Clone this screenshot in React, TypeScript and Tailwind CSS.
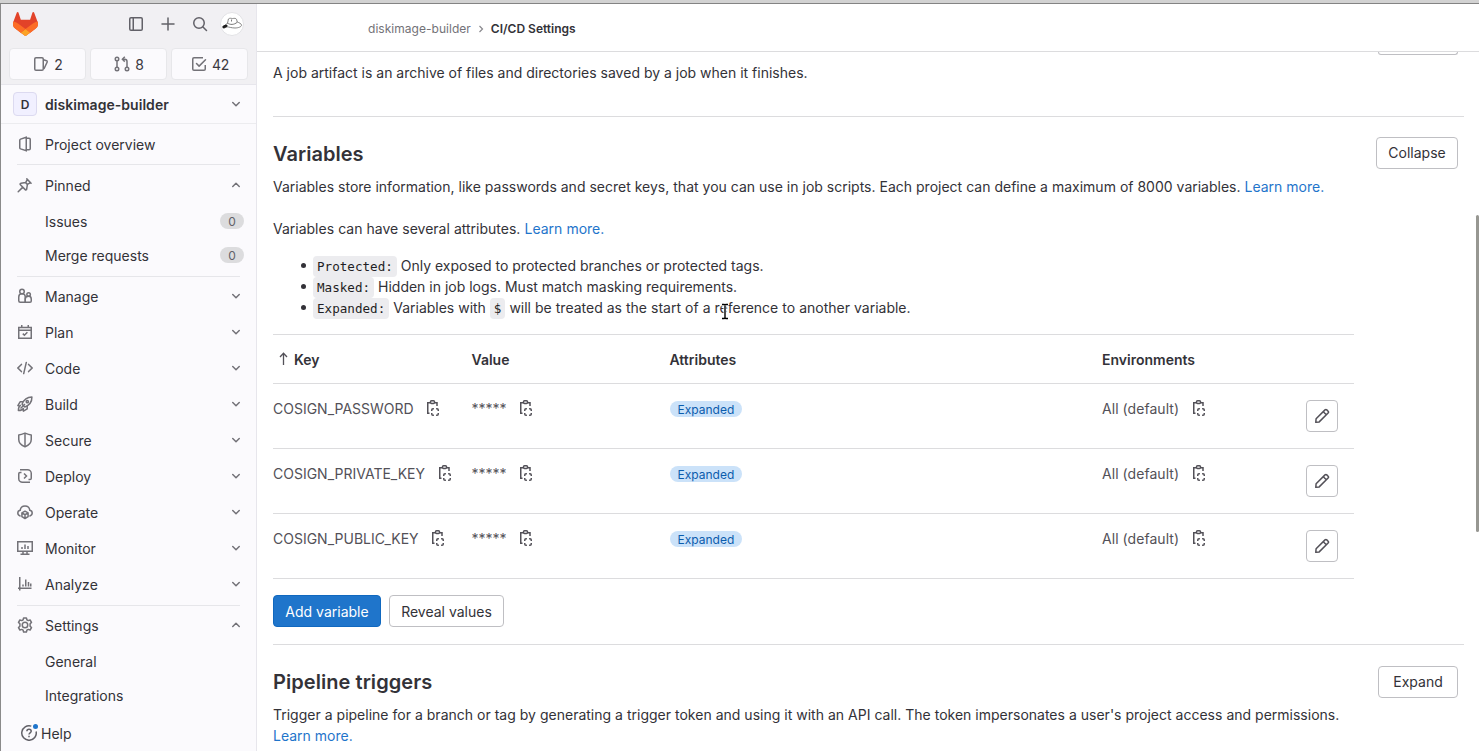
import React from "react";

type IconProps = { className?: string };

function Svg({ className = "", children }: IconProps & { children: React.ReactNode }) {
  return (
    <svg
      viewBox="0 0 16 16"
      className={`block size-4 shrink-0 ${className}`}
      fill="none"
      stroke="currentColor"
      strokeWidth="1.5"
    >
      {children}
    </svg>
  );
}

const icons = {
  sidebar: (
    <>
      <rect x="1.75" y="1.75" width="12.5" height="12.5" rx="1.25" />
      <path d="M5.25 2v12" />
    </>
  ),
  plus: <path d="M8 2v12M2 8h12" strokeLinecap="round" />,
  search: (
    <>
      <circle cx="7" cy="7" r="5.25" />
      <path d="m11 11 3.5 3.5" strokeLinecap="round" />
    </>
  ),
  issues: (
    <>
      <rect x="1.75" y="1.75" width="8.5" height="12.5" rx="1.25" />
      <path d="M10.5 3.8l3 .9c.6.2.9.7.7 1.3l-3.3 7" />
    </>
  ),
  merge: (
    <>
      <circle cx="3" cy="3" r="1.75" />
      <circle cx="3" cy="13" r="1.75" />
      <circle cx="13" cy="13" r="1.75" />
      <path d="M3 4.75v6.5M13 11.25V5.5c0-1.4-.8-2.25-2.2-2.25H9" />
      <path d="M10.8.8 8.4 3.2l2.4 2.4" />
    </>
  ),
  todo: (
    <>
      <path d="M14.25 9v4c0 .7-.55 1.25-1.25 1.25H3c-.7 0-1.25-.55-1.25-1.25V3c0-.7.55-1.25 1.25-1.25h9" />
      <path d="m5.5 7.5 2.6 2.6L14.5 3.7" strokeLinecap="round" strokeLinejoin="round" />
    </>
  ),
  project: (
    <>
      <path d="M9.25 1.2 3.6 3.1c-.5.2-.85.6-.85 1.2v7.4c0 .6.35 1 .85 1.2l5.65 1.9zM9.5 2.25H12c.7 0 1.25.5 1.25 1.25v9c0 .7-.5 1.25-1.25 1.25H9.5" />
    </>
  ),
  pin: (
    <path
      d="M1.2 14.8 5.6 10.4M9.8 1.9l4.3 4.3M10.4 2.5 8.6 5.6 4 6.3c-.9.2-1.2.9-.6 1.5l4.8 4.8c.6.6 1.3.3 1.5-.6l.7-4.6 3.1-1.8M8.6 5.6l1.8 1.8"
      strokeLinecap="round"
      strokeLinejoin="round"
    />
  ),
  manage: (
    <>
      <circle cx="5" cy="3.5" r="2.25" />
      <path d="M8.25 14.25h-5c-.8 0-1.5-.6-1.5-1.5V9c0-1.8 1.4-3.2 3.2-3.2 1.9 0 3.3 1.4 3.3 3.2z" />
      <circle cx="11.6" cy="6.5" r="1.75" />
      <path d="M8.25 14.25h4.7c.7 0 1.3-.6 1.3-1.3v-2c0-1.5-1.1-2.7-2.6-2.7-1.9 0-3.4 1-3.4 2.7z" />
    </>
  ),
  plan: (
    <>
      <path d="M1.75 3.5h12.5v10.75H1.75zM2 6.25h12M4.75 1v2.5M11.25 1v2.5" />
      <path d="m5.8 9.6 1.6 1.6 3-3" />
    </>
  ),
  code: <path d="M4.4 4.4.9 8l3.5 3.6M11.6 4.4 15.1 8l-3.5 3.6M9.3 2.4 6.7 13.6" strokeLinecap="round" />,
  build: (
    <>
      <path d="M5.1 8.2C6.6 4.3 9.4 1.2 14.9 1.1c.1 5.5-3.1 8.4-7.1 9.9z" strokeLinejoin="round" />
      <circle cx="10.3" cy="5.7" r="1.1" />
      <path
        d="M6.2 5.8H3.1L.9 9.6l2 .3M10.2 9.7v3.2l-3.8 2.3-.3-2.1M4 9.3c-1.6.6-2.6 1.7-2.6 5.3 3.4-.1 4.5-1 5.2-2.7"
        strokeLinejoin="round"
      />
      <path d="M3.5 12.5 8 8" />
    </>
  ),
  secure: (
    <>
      <path
        d="M1.75 2.9C4 2.7 6 1.9 8 1.1c2 .8 4 1.6 6.25 1.8v4.5c0 3.4-3 6-6.25 7.4-3.25-1.4-6.25-4-6.25-7.4z"
        strokeLinejoin="round"
      />
      <path d="M8 1.5v13" />
    </>
  ),
  deploy: (
    <>
      <path d="M3 1.75h7.5c2 0 3.75 1.5 3.75 3.5v5c0 .7-.5 1.25-1.25 1.25h-1.5M13 14.25H5.5c-2 0-3.75-1.5-3.75-3.5v-5c0-.7.5-1.25 1.25-1.25h1.5" />
      <path d="M7 5.5 9.5 8 7 10.5" />
    </>
  ),
  operate: (
    <>
      <path
        d="M3.1 11.9C1.7 11.6.8 10.4.8 9.1c0-1.5 1-2.6 2.4-2.8C3.5 3.8 5.5 2 8 2s4.5 1.8 4.8 4.3c1.4.2 2.4 1.3 2.4 2.8 0 1.3-.9 2.5-2.3 2.8"
        strokeLinecap="round"
      />
      <path d="m8 7.2 3.1 1.7v3.8L8 14.5l-3.1-1.8V8.9zM5 9l3 1.7L11 9M8 10.7v3.5" strokeLinejoin="round" />
    </>
  ),
  monitor: (
    <path d="M.75 1.75h14.5v9.5H.75zM6 11.5V14M10 11.5V14M3.5 14.25h9M5 7v2M8 4.5V9M11 6v3" />
  ),
  analyze: <path d="M2.75 1v13.5M1 12.25h13.5M6 8.5v2M8.75 3.5v7M11.5 6v4.5M13.75 7.5v3" />,
  settings: (
    <>
      <path
        d="M6.6.9h2.8l.5 1.9 1.3.8 1.9-.6 1.4 2.4-1.4 1.4v2.4l1.4 1.4-1.4 2.4-1.9-.6-1.3.8-.5 1.9H6.6l-.5-1.9-1.3-.8-1.9.6-1.4-2.4 1.4-1.4V6.8L1.5 5.4 2.9 3l1.9.6 1.3-.8z"
        strokeLinejoin="round"
      />
      <circle cx="8" cy="8" r="2.75" />
    </>
  ),
  help: (
    <>
      <path d="M10.3 1.15A7.25 7.25 0 1 0 15.1 6.5" />
      <path d="M5.9 6.3C5.9 5 6.8 4.2 8 4.2s2.2.8 2.2 2c0 1.5-2.2 1.7-2.2 3.3" />
      <path d="M8 10.7v1.6" />
    </>
  ),
  down: <path d="M4.75 6.5 8 9.7l3.25-3.2" strokeLinecap="round" strokeLinejoin="round" />,
  up: <path d="M4.75 9.5 8 6.3l3.25 3.2" strokeLinecap="round" strokeLinejoin="round" />,
  copy: (
    <>
      <path d="M5 2.75H2.75v10.5H4.5M10 2.75h2V6" />
      <rect x="5.5" y=".75" width="4" height="2.75" rx="1" />
      <path d="M8.9 8.75H8c-.8 0-1.25.45-1.25 1.25v.9M11.1 8.75h.9c.8 0 1.25.45 1.25 1.25v.9M6.75 13.1v.9c0 .8.45 1.25 1.25 1.25h.9M13.25 13.1v.9c0 .8-.45 1.25-1.25 1.25h-.9" />
    </>
  ),
  pencil: (
    <path
      d="M11 1.9c.5-.5 1.3-.5 1.8 0l1.3 1.3c.5.5.5 1.3 0 1.8L5.2 13.9l-3.4.4.3-3.5zM9.3 3.7l3 3"
      strokeLinejoin="round"
    />
  ),
};

type IconName = keyof typeof icons;

function Icon({ name, className }: { name: IconName; className?: string }) {
  return <Svg className={className}>{icons[name]}</Svg>;
}

function GitLabLogo() {
  return (
    <svg viewBox="0 0 25 24" className="block h-6 w-[25px]">
      <path
        d="m24.507 9.5-.034-.09L21.082.562a.896.896 0 0 0-1.694.091l-2.29 7.01H7.825L5.535.653a.898.898 0 0 0-1.694-.09L.451 9.411.416 9.5a6.297 6.297 0 0 0 2.09 7.278l.012.01.03.022 5.16 3.867 2.56 1.935 1.554 1.176a1.051 1.051 0 0 0 1.268 0l1.555-1.176 2.56-1.935 5.197-3.89.014-.01A6.297 6.297 0 0 0 24.507 9.5Z"
        fill="#E24329"
      />
      <path
        d="m24.507 9.5-.034-.09a11.44 11.44 0 0 0-4.56 2.051l-7.447 5.632 4.742 3.584 5.197-3.89.014-.01A6.297 6.297 0 0 0 24.507 9.5Z"
        fill="#FC6D26"
      />
      <path
        d="m7.707 20.677 2.56 1.935 1.555 1.176a1.051 1.051 0 0 0 1.268 0l1.555-1.176 2.56-1.935-4.743-3.584-4.755 3.584Z"
        fill="#FCA326"
      />
      <path
        d="M5.01 11.461a11.43 11.43 0 0 0-4.56-2.05L.416 9.5a6.297 6.297 0 0 0 2.09 7.278l.012.01.03.022 5.16 3.867 4.745-3.584-7.444-5.632Z"
        fill="#FC6D26"
      />
    </svg>
  );
}

function Avatar() {
  return (
    <svg viewBox="0 0 24 24" className="block size-6">
      <circle cx="12" cy="12" r="11.5" fill="#fff" stroke="#e2e2e5" />
      <path
        d="M4.5 13.5c1-1 2-1.6 3-2L8.400 7c1.300-1.200 3-.6 4.200-.4 1.500-.4 3.200-.5 4 .8l.6 2.600c2 .7 4.300 1.700 4.300 3.200 0 1.700-3.500 2.800-6.500 2.800-3.500 0-5.500-1-8-1.200L4 16.200z"
        fill="#fff"
        stroke="#6a6a6a"
        strokeWidth=".8"
      />
      <path d="M2.200 14.800c1.300-2 3.600-2.700 5-1.700 1 .8.200 2-1.600 2.300L3 16.500z" fill="#1c1c1c" />
      <path d="M7.500 11c2.500 2 6.500 2 9.800-.8M11.500 7.500v2" fill="none" stroke="#555" strokeWidth=".8" />
    </svg>
  );
}

function Counter({ icon, value }: { icon: IconName; value: string }) {
  return (
    <div className="flex h-8 flex-1 items-center justify-center gap-[5px] rounded border border-[#e7e7ea] bg-[#fbfafd] pl-px text-[#3a383f]">
      <Icon name={icon} className="text-[#737278]" />
      <span className="text-[14px] tracking-[-0.2px]">{value}</span>
    </div>
  );
}

function NavItem({ icon, label, chevron }: { icon: IconName; label: string; chevron?: "up" | "down" }) {
  return (
    <div className="flex h-9 items-center pr-3 pl-4">
      <Icon name={icon} className="text-[#737278]" />
      <span className="ml-3 flex-1">{label}</span>
      {chevron && <Icon name={chevron} className="text-[#737278]" />}
    </div>
  );
}

function SubItem({ label, count }: { label: string; count?: string }) {
  return (
    <div className="flex h-[34px] items-center justify-between pr-3 pl-11">
      <span>{label}</span>
      {count && (
        <span className="flex h-4 w-6 items-center justify-center rounded-full bg-[#dcdcde] text-[12px] text-[#626168]">
          {count}
        </span>
      )}
    </div>
  );
}

function Separator({ className }: { className: string }) {
  return <div className={`mr-4 ml-4 h-px shrink-0 bg-[#e6e6ea] ${className}`} />;
}

const sections: { icon: IconName; label: string }[] = [
  { icon: "manage", label: "Manage" },
  { icon: "plan", label: "Plan" },
  { icon: "code", label: "Code" },
  { icon: "build", label: "Build" },
  { icon: "secure", label: "Secure" },
  { icon: "deploy", label: "Deploy" },
  { icon: "operate", label: "Operate" },
  { icon: "monitor", label: "Monitor" },
  { icon: "analyze", label: "Analyze" },
];

function Sidebar() {
  return (
    <aside className="flex w-[257px] shrink-0 flex-col border-r border-l border-r-[#e7e6ec] border-l-[#8a8a8a] bg-[#fbfafd] text-[#333238]">
      <div className="flex h-[81px] shrink-0 flex-col border-b border-[#e7e6ec] bg-[#f1f0f3]">
        <div className="flex h-10 items-center pr-3 pl-3">
          <GitLabLogo />
          <div className="ml-auto flex items-center gap-4 text-[#626168]">
            <Icon name="sidebar" />
            <Icon name="plus" />
            <Icon name="search" />
            <span className="-ml-1">
              <Avatar />
            </span>
          </div>
        </div>
        <div className="mt-1 flex gap-1 pr-[8px] pl-2">
          <Counter icon="issues" value="2" />
          <Counter icon="merge" value="8" />
          <Counter icon="todo" value="42" />
        </div>
      </div>
      <div className="flex h-[39px] shrink-0 items-center border-b border-[#ececef] pr-3 pl-3 font-semibold">
        <span className="flex size-6 items-center justify-center rounded border border-[#dcdaf0] bg-[#f1f0ff] text-[12px]">
          D
        </span>
        <span className="ml-2 flex-1 tracking-[0.04px]">diskimage-builder</span>
        <Icon name="down" className="text-[#737278]" />
      </div>
      <nav className="flex flex-1 flex-col pt-[2px]">
        <NavItem icon="project" label="Project overview" />
        <Separator className="mt-[2px] mb-[2px]" />
        <NavItem icon="pin" label="Pinned" chevron="up" />
        <div className="pt-px">
          <SubItem label="Issues" count="0" />
          <SubItem label="Merge requests" count="0" />
        </div>
        <Separator className="mt-[4px] mb-px" />
        {sections.map((s) => (
          <NavItem key={s.label} icon={s.icon} label={s.label} chevron="down" />
        ))}
        <Separator className="mt-[3px] mb-px" />
        <NavItem icon="settings" label="Settings" chevron="up" />
        <div className="pt-px">
          <SubItem label="General" />
          <SubItem label="Integrations" />
        </div>
        <div className="mt-[5px] flex h-8 items-center gap-1 pl-5">
          <span className="relative text-[#626168]">
            <Icon name="help" />
            <span className="absolute -top-px -right-px size-[5px] rounded-full bg-[#1f75cb]" />
          </span>
          Help
        </div>
      </nav>
    </aside>
  );
}

function Link({ children }: { children: React.ReactNode }) {
  return <a className="text-[#1f75cb]">{children}</a>;
}

function Code({ children }: { children: React.ReactNode }) {
  return (
    <code className="rounded bg-[#ececef] px-1 py-[3px] font-['DejaVu_Sans_Mono',monospace] text-[12.6px] leading-none text-[#1f1e24]">
      {children}
    </code>
  );
}

function Bullet({ children }: { children: React.ReactNode }) {
  return (
    <li className="relative h-[21px] before:absolute before:top-2 before:-left-[12.5px] before:size-[5px] before:rounded-full before:bg-[#333238]">
      {children}
    </li>
  );
}

function Button({ children, className = "" }: { children?: React.ReactNode; className?: string }) {
  return (
    <button
      className={`flex h-8 shrink-0 items-center justify-center rounded border border-[#bfbfc3] bg-white text-[#333238] ${className}`}
    >
      {children}
    </button>
  );
}

function Variable({ name }: { name: string }) {
  return (
    <div className="grid grid-cols-[198.5px_198px_432.5px_204px_32px] border-t border-[#dcdcde] py-4 text-[#535158]">
      <div className="flex h-4 items-center gap-[11.5px]">
        {name}
        <Icon name="copy" />
      </div>
      <div className="flex h-4 items-center gap-[11px]">
        *****
        <Icon name="copy" />
      </div>
      <div className="flex h-[18px] items-center">
        <span className="flex h-4 items-center rounded-full bg-[#cbe2f9] px-2 text-[12px] text-[#0b5cad]">
          Expanded
        </span>
      </div>
      <div className="flex h-4 items-center gap-3">
        <span className="tracking-[0.05px]">All (default)</span>
        <Icon name="copy" />
      </div>
      <Button className="w-8">
        <Icon name="pencil" className="text-[#535158]" />
      </Button>
    </div>
  );
}

function TextCursor() {
  return (
    <svg viewBox="0 0 8 17" className="absolute top-[48px] left-[448px] h-[17px] w-2">
      <path d="M.5.5h7v3h-2v10h2v3h-7v-3h2v-10h-2z" fill="#fff" />
      <path d="M1 1.5h2.2l.8.5.8-.5H7M4 2v13M1 15.5h2.200l.8-.5.8.5H7" fill="none" stroke="#000" strokeWidth="1.4" />
    </svg>
  );
}

export default function App() {
  return (
    <div className="flex h-[751px] w-[1479px] flex-col overflow-hidden bg-white font-['Inter',sans-serif] text-[14px] leading-[21px] text-[#333238]">
      <div className="h-1 shrink-0 border-b border-[#838383] bg-[#d2d2d2]" />
      <div className="flex min-h-0 flex-1">
        <Sidebar />
        <main className="flex min-w-0 flex-1 flex-col">
          <header className="flex h-12 shrink-0 items-center border-b border-[#dcdcde] pt-[2px] pl-[111px] text-[12px]">
            <span className="tracking-[0.03px] text-[#737278]">diskimage-builder</span>
            <svg viewBox="0 0 8 8" className="mx-[6px] size-2" fill="none" stroke="#89888d" strokeWidth="1.2">
              <path d="m2.5 1 3 3-3 3" />
            </svg>
            <span className="font-semibold">CI/CD Settings</span>
          </header>
          <div className="flex min-h-0 flex-1 justify-between">
            <div className="flex w-[1207px] flex-col pl-4">
              <div className="flex h-[65px] shrink-0 justify-between border-b border-[#dcdcde] pr-1.5">
                <p className="pt-[10px]">A job artifact is an archive of files and directories saved by a job when it finishes.</p>
                <div className="h-[3px] w-20 rounded-b border border-t-0 border-[#bfbfc3]" />
              </div>

              <section className="flex shrink-0 flex-col border-b border-[#dcdcde] pt-5 pb-[17px]">
                <div className="flex items-center justify-between pr-1.5">
                  <h2 className="pt-[2px] text-[20px] font-semibold tracking-[0.04px]">Variables</h2>
                  <Button className="w-[82px] pb-[2px]">Collapse</Button>
                </div>
                <p className="mt-[7px] [word-spacing:0.04px]">
                  Variables store information, like passwords and secret keys, that you can use in job scripts. Each
                  project can define a maximum of 8000 variables. <Link>Learn more.</Link>
                </p>
                <p className="mt-[21px] [word-spacing:0.15px]">
                  Variables can have several attributes. <Link>Learn more.</Link>
                </p>
                <div className="relative mt-4">
                  <ul className="pl-10">
                    <Bullet>
                      <Code>Protected:</Code> Only exposed to protected branches or protected tags.
                    </Bullet>
                    <Bullet>
                      <Code>Masked:</Code> Hidden in job logs. Must match masking requirements.
                    </Bullet>
                    <Bullet>
                      <Code>Expanded:</Code> Variables with <Code>$</Code>{" "}
                      <span className="[word-spacing:0.08px]">
                        will be treated as the start of a reference to another variable.
                      </span>
                    </Bullet>
                  </ul>
                  <TextCursor />
                </div>
                <div className="mt-4 w-[1081px] border-y border-[#dcdcde]">
                  <div className="grid h-12 grid-cols-[198.5px_198px_432.5px_204px_32px] items-center font-semibold">
                    <div className="flex items-center gap-[5px] pl-[5px]">
                      <svg viewBox="0 0 11 14" className="h-[14px] w-[11px]" fill="none" stroke="#535158" strokeWidth="1.3">
                        <path d="M5.5 13V1.5M2 5l3.5-3.7L9 5" />
                      </svg>
                      Key
                    </div>
                    <div>Value</div>
                    <div>Attributes</div>
                    <div>Environments</div>
                  </div>
                  <Variable name="COSIGN_PASSWORD" />
                  <Variable name="COSIGN_PRIVATE_KEY" />
                  <Variable name="COSIGN_PUBLIC_KEY" />
                </div>
                <div className="mt-4 flex gap-2">
                  <Button className="w-[108px] border-[#1068bf]! bg-[#1f75cb]! text-white!">Add variable</Button>
                  <Button className="w-[115px]">Reveal values</Button>
                </div>
              </section>

              <section className="flex shrink-0 flex-col pt-[21px]">
                <div className="flex items-center justify-between pr-1.5">
                  <h2 className="text-[20px] font-semibold tracking-[0.06px]">Pipeline triggers</h2>
                  <Button className="w-20 pb-[2px]">Expand</Button>
                </div>
                <p className="mt-[6px] w-[1081px] [word-spacing:0.06px]">
                  Trigger a pipeline for a branch or tag by generating a trigger token and using it with an API call. The
                  token impersonates a user's project access and permissions. <Link>Learn more.</Link>
                </p>
              </section>
            </div>
            <div className="mt-[163px] h-[317px] w-[3px] rounded-full bg-[#979792]" />
          </div>
        </main>
      </div>
    </div>
  );
}
